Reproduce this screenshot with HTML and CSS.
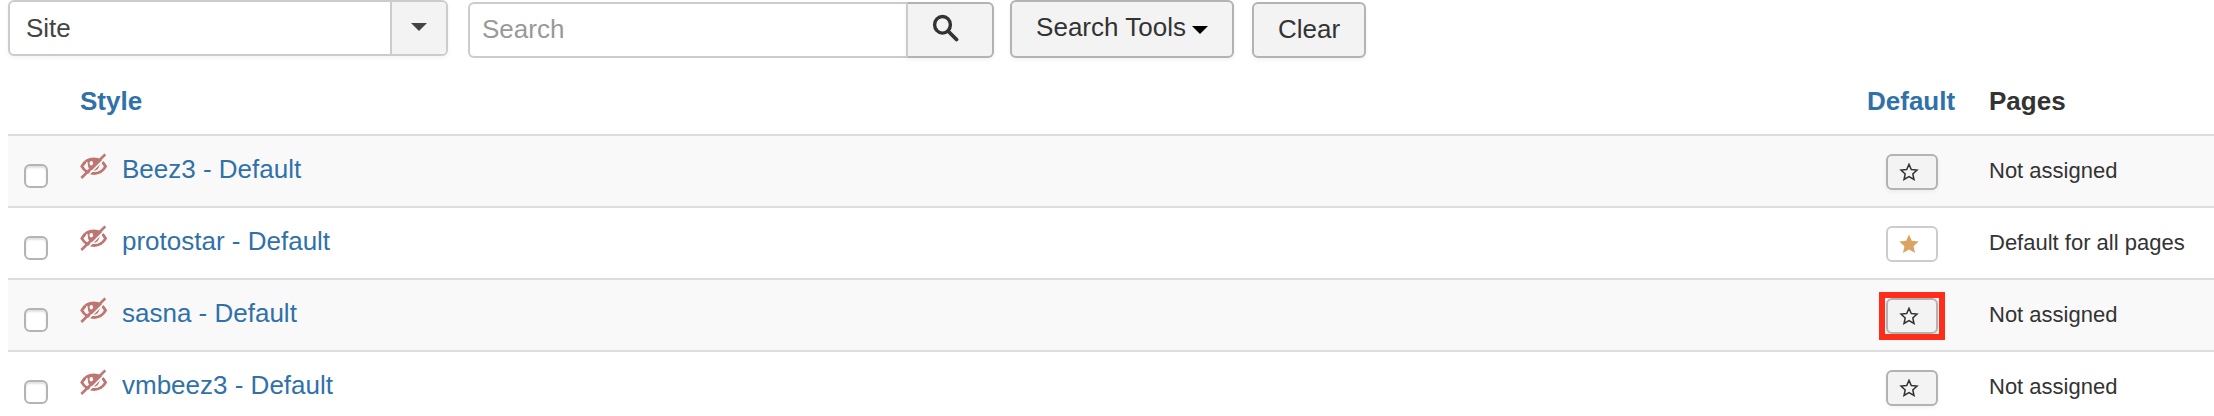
FILE: index.html
```html
<!DOCTYPE html>
<html lang="en">
<head>
<meta charset="utf-8">
<title>Styles</title>
<link rel="stylesheet" href="styles.css">
</head>
<body>
<svg class="sprite" aria-hidden="true">
  <symbol id="eye" viewBox="0 0 28 26">
    <path d="M1.800 13.400C4.500 8.500 8.500 6 13.800 6S23 8.500 25.600 13.400C23 18.200 19 20.500 13.800 20.500S4.500 18.200 1.800 13.400Z" fill="none" stroke="currentColor" stroke-width="2.800"/>
    <path d="M7 7.500C11 4.500 17 4.500 21 7.500L19.800 10C20.200 14.800 17.800 17.600 13.800 17.600S7.500 14.800 7.800 10Z" fill="currentColor"/>
    <ellipse class="gap" cx="11.300" cy="10.300" rx="1.800" ry="2.300" stroke-width="0"/>
    <path class="gap" d="M6.800 8.800C6.200 11 6.400 13.300 7.600 15.500" fill="none" stroke-width="1"/>
    <path class="gap" d="M21 9.500C21.400 13 20 16.300 17 18" fill="none" stroke-width="1.400"/>
    <path class="gap" d="M3.700 26.500L27.700 2.600" fill="none" stroke-width="1.600"/>
    <path d="M1.300 25L25.300 1.300" fill="none" stroke="currentColor" stroke-width="2.600"/>
  </symbol>
  <symbol id="star-empty" viewBox="0 0 20 20">
    <path d="M10 2.400L12.300 7.500L18 8.100L13.800 11.900L15 17.500L10 14.700L5 17.500L6.200 11.900L2 8.100L7.700 7.500Z" fill="none" stroke="currentColor" stroke-width="1.500"/>
  </symbol>
  <symbol id="star" viewBox="0 0 20 20">
    <path d="M10 .5L12.800 6.800L19.700 7.500L14.600 12.200L16 19L10 15.600L4 19L5.400 12.200L.3 7.500L7.200 6.800Z" fill="currentColor"/>
  </symbol>
</svg>

<form class="toolbar">
  <div class="select">
    <select aria-label="Location"><option>Site</option><option>Administrator</option></select>
    <span class="select-arrow"><span class="caret"></span></span>
  </div>
  <div class="search">
    <input type="text" placeholder="Search" aria-label="Search">
    <button type="button" class="btn search-btn" aria-label="Submit search">
      <svg class="search-icon" viewBox="0 0 28 28" aria-hidden="true"><ellipse cx="10.500" cy="10.800" rx="7.900" ry="8.300" fill="none" stroke="currentColor" stroke-width="3.400"/><path d="M16.500 17.500L24.500 25.500" stroke="currentColor" stroke-width="3.800" stroke-linecap="round"/></svg>
    </button>
  </div>
  <button type="button" class="btn tools-btn">Search Tools<span class="caret"></span></button>
  <button type="button" class="btn clear-btn">Clear</button>
</form>

<table class="styles">
  <thead>
    <tr><th class="col-check"></th><th class="col-style"><a href="#">Style</a></th><th class="col-default"><a href="#">Default</a></th><th class="col-pages">Pages</th></tr>
  </thead>
  <tbody>
    <tr>
      <td class="col-check"><input type="checkbox" aria-label="Select Beez3"></td>
      <td class="col-style"><div class="title"><svg class="eye" aria-hidden="true"><use href="#eye"/></svg><a href="#">Beez3 - Default</a></div></td>
      <td class="col-default"><button type="button" class="btn star-btn" aria-label="Set default"><svg class="star" aria-hidden="true"><use href="#star-empty"/></svg></button></td>
      <td class="col-pages">Not assigned</td>
    </tr>
    <tr>
      <td class="col-check"><input type="checkbox" aria-label="Select protostar"></td>
      <td class="col-style"><div class="title"><svg class="eye" aria-hidden="true"><use href="#eye"/></svg><a href="#">protostar - Default</a></div></td>
      <td class="col-default"><button type="button" class="btn star-btn is-default" aria-label="Default"><svg class="star" aria-hidden="true"><use href="#star"/></svg></button></td>
      <td class="col-pages">Default for all pages</td>
    </tr>
    <tr>
      <td class="col-check"><input type="checkbox" aria-label="Select sasna"></td>
      <td class="col-style"><div class="title"><svg class="eye" aria-hidden="true"><use href="#eye"/></svg><a href="#">sasna - Default</a></div></td>
      <td class="col-default"><button type="button" class="btn star-btn is-marked" aria-label="Set default"><svg class="star" aria-hidden="true"><use href="#star-empty"/></svg></button></td>
      <td class="col-pages">Not assigned</td>
    </tr>
    <tr>
      <td class="col-check"><input type="checkbox" aria-label="Select vmbeez3"></td>
      <td class="col-style"><div class="title"><svg class="eye" aria-hidden="true"><use href="#eye"/></svg><a href="#">vmbeez3 - Default</a></div></td>
      <td class="col-default"><button type="button" class="btn star-btn" aria-label="Set default"><svg class="star" aria-hidden="true"><use href="#star-empty"/></svg></button></td>
      <td class="col-pages">Not assigned</td>
    </tr>
  </tbody>
</table>
</body>
</html>
```
FILE: styles.css
```css
* { box-sizing: border-box; }

body {
  margin: 0;
  padding-left: 8px;
  background: #fff;
  color: #333;
  font: 26px/36px "Liberation Sans", Arial, sans-serif;
}

a { color: #3071a9; text-decoration: none; }
button, input, select { font: inherit; color: inherit; margin: 0; }
.sprite { position: absolute; width: 0; height: 0; }

.toolbar { display: flex; align-items: flex-end; height: 58px; }

.btn {
  display: flex;
  align-items: center;
  justify-content: center;
  height: 56px;
  padding: 0 24px;
  border: 2px solid #b3b3b3;
  border-radius: 6px;
  background: #f3f3f3;
  box-shadow: 0 2px 4px rgba(0, 0, 0, .05);
}

.caret {
  border: 8px solid transparent;
  border-top-color: currentColor;
  border-bottom: 0;
}

.select { position: relative; align-self: flex-start; width: 440px; }
.select select {
  display: block;
  width: 100%;
  height: 56px;
  padding: 0 72px 0 16px;
  appearance: none;
  border: 2px solid #ccc;
  border-radius: 6px;
  background: #fff;
  color: #444;
  box-shadow: 0 2px 4px rgba(0, 0, 0, .05);
}
.select-arrow {
  position: absolute;
  top: 2px;
  right: 2px;
  bottom: 2px;
  width: 56px;
  display: flex;
  align-items: center;
  justify-content: center;
  padding-bottom: 2px;
  border-left: 2px solid #ccc;
  border-radius: 0 4px 4px 0;
  background: #f3f3f3;
  color: #444;
  pointer-events: none;
}

.search { display: flex; margin-left: 20px; }
.search input {
  width: 438px;
  height: 56px;
  padding: 0 12px 2px;
  border: 2px solid #ccc;
  border-right: 0;
  border-radius: 6px 0 0 6px;
  background: #fff;
}
.search input::placeholder { color: #999; opacity: 1; }
.search-btn {
  width: 88px;
  padding-bottom: 4px;
  border-left-color: #ccc;
  border-radius: 0 6px 6px 0;
  justify-content: flex-start;
}
.search-icon { width: 28px; height: 28px; flex: none; }

.tools-btn { width: 224px; height: 58px; margin-left: 16px; padding-bottom: 4px; gap: 6px; }
.tools-btn .caret { border-top-color: #000; margin-top: 6px; }
.clear-btn { width: 114px; margin-left: 18px; padding-bottom: 2px; }

.styles { width: 100%; border-collapse: separate; border-spacing: 0; table-layout: fixed; }
.styles th { padding: 25px 16px 15px; text-align: left; font-weight: bold; }
.styles td { height: 72px; padding: 16px 16px 0; border-top: 2px solid #ddd; vertical-align: top; }
.styles tbody tr { --row: #fff; background: var(--row); }
.styles tbody tr:nth-child(odd) { --row: #f9f9f9; }
.styles .col-check { width: 56px; }
.styles .col-default { width: 122px; }
.styles th.col-default { padding-right: 12px; }
.styles .col-pages { width: 241px; }
.styles td.col-pages { padding-top: 17px; font-size: 22px; white-space: nowrap; }
.styles td.col-check { padding-top: 28px; }
.styles td.col-default { padding-top: 18px; }

.col-check input {
  display: block;
  width: 24px;
  height: 24px;
  appearance: none;
  border: 2px solid #b4b4b4;
  border-radius: 6px;
  background: #fff;
  box-shadow: inset 0 2px 2px rgba(0, 0, 0, .12);
}

.title { display: flex; align-items: flex-start; gap: 14px; line-height: 34px; }
.eye { width: 28px; height: 26px; color: #bd7672; margin-top: 1px; }
.gap { fill: var(--row); stroke: var(--row); }

.star-btn {
  position: relative;
  width: 52px;
  height: 36px;
  margin: 0 auto;
  padding: 0 11px;
  justify-content: flex-start;
}
.star { width: 20px; height: 20px; flex: none; }
.is-default { background: #fff; border-color: #ccc; box-shadow: none; color: #dba466; }
.is-marked::after {
  content: "";
  position: absolute;
  inset: -8px -9px;
  border: 6px solid #ff2d1a;
}
```
